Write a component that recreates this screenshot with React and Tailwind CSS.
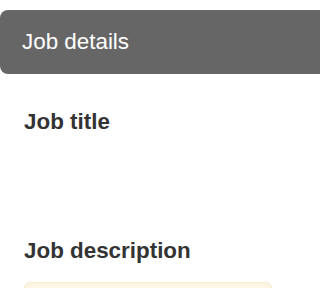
export default function App() {
  return (
    <div className="h-[288px] w-full overflow-hidden bg-white pt-[10px] font-['Liberation_Sans',Arial,sans-serif]">
      <div className="flex h-[64px] w-full items-center rounded-l-lg bg-[#666666] pl-[22px] text-[22.4px] text-white">
        Job details
      </div>
      <div className="flex flex-col px-[24px]">
        <h2 className="mt-[35px] text-[22.4px] font-bold leading-[26px] text-[#333333]">
          Job title
        </h2>
        <div className="h-[103px]" />
        <h2 className="text-[22.4px] font-bold leading-[26px] text-[#333333]">
          Job description
        </h2>
        <div className="mt-[18px] h-[60px] w-[248px] rounded-md border border-[#f6ebcf] bg-[#fdf6e4]" />
      </div>
    </div>
  )
}
